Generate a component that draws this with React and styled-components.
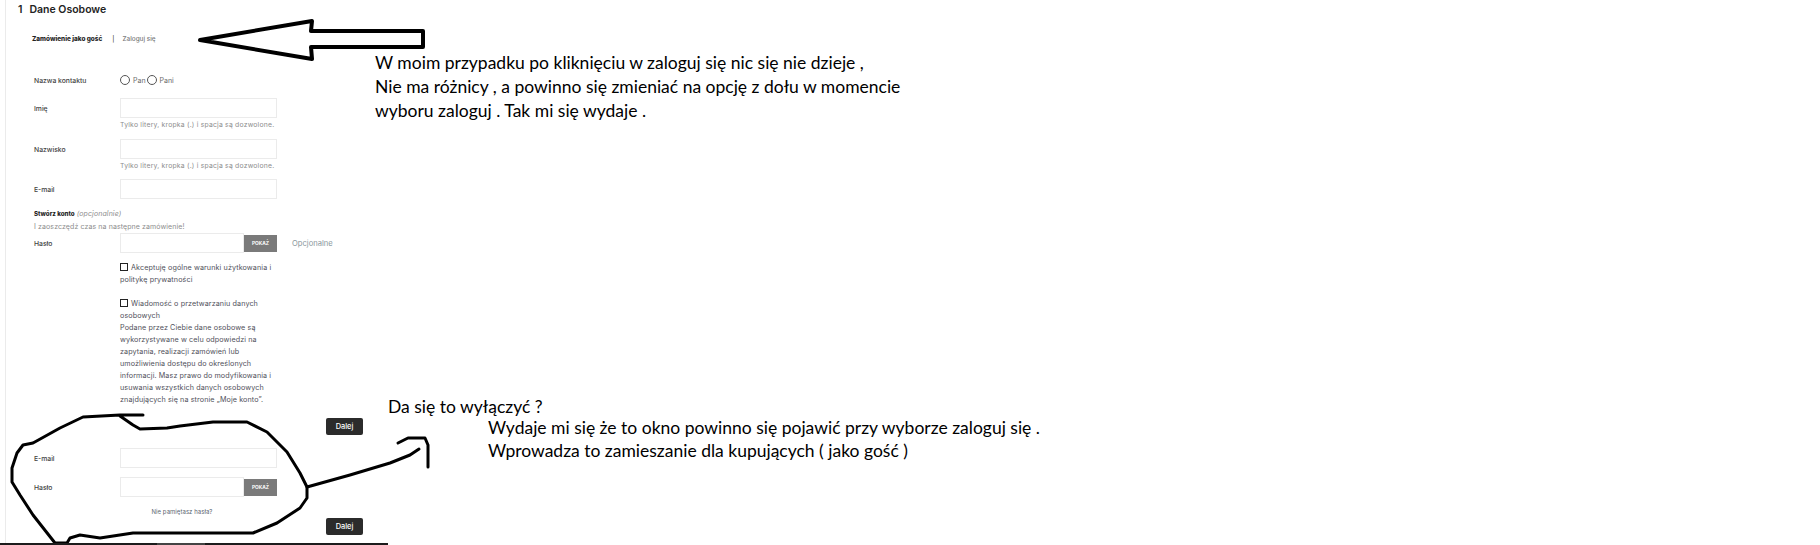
import React from "react";
import styled, { createGlobalStyle } from "styled-components";

const GlobalStyle = createGlobalStyle`
  html, body { margin: 0; padding: 0; background: #fff; }
  body { font-family: "Inter", "Liberation Sans", sans-serif; }
  * { box-sizing: border-box; }
`;

const Page = styled.div`
  position: relative;
  width: 1820px;
  height: 545px;
  overflow: hidden;
  background: #fff;
`;

const Section = styled.section`
  width: 388px;
  height: 543px;
  margin-left: 5px;
  border-left: 1px solid #ebebeb;
  padding-top: 3px;
`;

const Heading = styled.h2`
  margin: 0 0 0 12px;
  font-size: 10.5px;
  line-height: 13px;
  font-weight: 600;
  color: #232323;
  display: flex;
  gap: 7px;
`;

const Tabs = styled.div`
  display: flex;
  align-items: center;
  height: 12px;
  margin: 17px 0 0 26px;
  font-size: 6.4px;
  color: #7a7a7a;
  font-weight: 500;
`;

const ActiveTab = styled.span`
  font-weight: 800;
  color: #232323;
`;

const Separator = styled.span`
  margin: 0 8px 0 10px;
  color: #555;
`;

const Form = styled.form`
  margin: ${(p) => p.$top}px 0 0 28px;
  width: 329px;
`;

const Row = styled.div`
  display: grid;
  grid-template-columns: 86px 157px auto;
  align-items: center;
  min-height: 20px;
  margin-bottom: ${(p) => p.$gap || 0}px;
`;

const Label = styled.label`
  font-size: 6.8px;
  color: #414141;
  font-weight: 500;
`;

const Radios = styled.div`
  display: flex;
  align-items: center;
  gap: 1px;
  font-size: 7px;
  color: #6a6a6a;
`;

const Radio = styled.span`
  width: 10px;
  height: 10px;
  border: 1px solid #555;
  border-radius: 50%;
  margin-right: 2px;
`;

const Input = styled.div`
  height: 20px;
  border: 1px solid #ebebeb;
  background: #fff;
`;

const PasswordField = styled.div`
  display: flex;
  align-items: center;
`;

const PasswordInput = styled(Input)`
  width: 124px;
`;

const ShowButton = styled.span`
  width: 33px;
  height: 17px;
  background: #7a7a7a;
  color: #fff;
  font-size: 4.8px;
  font-weight: 700;
  display: flex;
  align-items: center;
  justify-content: center;
`;

const Optional = styled.span`
  margin-left: 15px;
  font-size: 7.6px;
  color: #8a979c;
`;

const Hint = styled.div`
  margin: 2px 0 0 86px;
  font-size: 6.8px;
  letter-spacing: 0.22px;
  line-height: 9px;
  height: ${(p) => p.$height}px;
  color: #8d8d8d;
  white-space: nowrap;
`;

const Account = styled.div`
  margin-top: 8px;
  font-size: 7px;
  letter-spacing: 0.1px;
  line-height: 13px;
  color: #8d8d8d;
`;

const Strong = styled.strong`
  font-size: 6.2px;
  font-weight: 800;
  letter-spacing: 0;
  color: #232323;
`;

const Consent = styled.div`
  margin: ${(p) => p.$top}px 0 0 86px;
  font-size: 7.2px;
  letter-spacing: 0.1px;
  line-height: 12px;
  color: #50505a;
  white-space: nowrap;
`;

const Checkbox = styled.span`
  display: inline-block;
  width: 8px;
  height: 8px;
  border: 1px solid #232323;
  margin-right: 3px;
  vertical-align: -1px;
`;

const Actions = styled.div`
  display: flex;
  justify-content: flex-end;
  margin-top: ${(p) => p.$top}px;
`;

const NextButton = styled.span`
  width: 37px;
  height: 17px;
  border-radius: 2px;
  background: #2b2b2b;
  color: #fff;
  font-size: 7.4px;
  font-weight: 500;
  display: flex;
  align-items: center;
  justify-content: center;
`;

const Forgot = styled.div`
  margin: 11px 0 0 86px;
  width: 124px;
  text-align: center;
  font-size: 6px;
  letter-spacing: 0.05px;
  line-height: 8px;
  color: #5c6670;
`;

const TaskBar = styled.div`
  position: absolute;
  left: 0;
  bottom: 0;
  width: 388px;
  height: 2px;
  background: linear-gradient(90deg, #1c1c1c 157px, #444 157px, #444 205px, #1c1c1c 205px);
`;

const Note = styled.div`
  position: absolute;
  left: ${(p) => p.$x}px;
  top: ${(p) => p.$y}px;
  font-family: "Lato", "Open Sans", sans-serif;
  font-size: 17.5px;
  line-height: ${(p) => p.$lineHeight || 24}px;
  color: #000;
  white-space: nowrap;
`;

const Drawing = styled.svg`
  position: absolute;
  left: 0;
  top: 0;
  pointer-events: none;
`;

function Annotations() {
  return (
    <Drawing width="1820" height="545" viewBox="0 0 1820 545" fill="none">
      <path
        d="M200 40 L312 21 L311 31 L423 31 L423 47 L311 47 L312 59 Z"
        stroke="#000"
        strokeWidth="4"
        strokeLinejoin="round"
      />
      <path
        d="M143 415 L120 415 L83 417 L60 428 L33 443 L23 445 L17 453 L12 468 L12 482 L20 495 L33 515 L55 543 L67 543 L70 538 L80 535 L100 538 L133 533 L253 533 L277 523 L300 508 L307 498 L307 487 L300 473 L287 452 L267 432 L247 422 L213 422 L180 426 L167 428 L140 429 L133 425 L120 416"
        stroke="#000"
        strokeWidth="3"
        strokeLinejoin="round"
        strokeLinecap="round"
      />
      <path
        d="M307 487 L350 475 L390 463 L410 455 L419 449"
        stroke="#000"
        strokeWidth="3"
        strokeLinejoin="round"
        strokeLinecap="round"
      />
      <path
        d="M398 443 L408 438 L425 438 L428 445 L428 467"
        stroke="#000"
        strokeWidth="3"
        strokeLinejoin="round"
        strokeLinecap="round"
      />
    </Drawing>
  );
}

export default function App() {
  return (
    <Page>
      <GlobalStyle />
      <Section>
        <Heading>
          <span>1</span>
          <span>Dane Osobowe</span>
        </Heading>
        <Tabs>
          <ActiveTab>Zamówienie jako gość</ActiveTab>
          <Separator>|</Separator>
          <span>Zaloguj się</span>
        </Tabs>
        <Form $top={25}>
          <Row $gap={8}>
            <Label>Nazwa kontaktu</Label>
            <Radios>
              <Radio />
              Pan
              <Radio />
              Pani
            </Radios>
          </Row>
          <Row>
            <Label>Imię</Label>
            <Input />
          </Row>
          <Hint $height={19}>Tylko litery, kropka (.) i spacja są dozwolone.</Hint>
          <Row>
            <Label>Nazwisko</Label>
            <Input />
          </Row>
          <Hint $height={18}>Tylko litery, kropka (.) i spacja są dozwolone.</Hint>
          <Row>
            <Label>E-mail</Label>
            <Input />
          </Row>
          <Account>
            <div>
              <Strong>Stwórz konto</Strong> <em>(opcjonalnie)</em>
            </div>
            <div>I zaoszczędź czas na następne zamówienie!</div>
          </Account>
          <Row>
            <Label>Hasło</Label>
            <PasswordField>
              <PasswordInput />
              <ShowButton>POKAŻ</ShowButton>
            </PasswordField>
            <Optional>Opcjonalne</Optional>
          </Row>
          <Consent $top={9}>
            <Checkbox />
            Akceptuję ogólne warunki użytkowania i
            <br />
            politykę prywatności
          </Consent>
          <Consent $top={12}>
            <Checkbox />
            Wiadomość o przetwarzaniu danych
            <br />
            osobowych
            <br />
            Podane przez Ciebie dane osobowe są
            <br />
            wykorzystywane w celu odpowiedzi na
            <br />
            zapytania, realizacji zamówień lub
            <br />
            umożliwienia dostępu do określonych
            <br />
            informacji. Masz prawo do modyfikowania i
            <br />
            usuwania wszystkich danych osobowych
            <br />
            znajdujących się na stronie „Moje konto”.
          </Consent>
          <Actions $top={12}>
            <NextButton>Dalej</NextButton>
          </Actions>
        </Form>
        <Form $top={13}>
          <Row $gap={9}>
            <Label>E-mail</Label>
            <Input />
          </Row>
          <Row>
            <Label>Hasło</Label>
            <PasswordField>
              <PasswordInput />
              <ShowButton>POKAŻ</ShowButton>
            </PasswordField>
          </Row>
          <Forgot>Nie pamiętasz hasła?</Forgot>
          <Actions $top={2}>
            <NextButton>Dalej</NextButton>
          </Actions>
        </Form>
      </Section>
      <Annotations />
      <Note $x={375} $y={51}>
        W moim przypadku po kliknięciu w zaloguj się nic się nie dzieje ,
        <br />
        Nie ma różnicy , a powinno się zmieniać na opcję z dołu w momencie
        <br />
        wyboru zaloguj . Tak mi się wydaje .
      </Note>
      <Note $x={388} $y={395}>Da się to wyłączyć ?</Note>
      <Note $x={488} $y={416} $lineHeight={23}>
        Wydaje mi się że to okno powinno się pojawić przy wyborze zaloguj się .
        <br />
        Wprowadza to zamieszanie dla kupujących ( jako gość )
      </Note>
      <TaskBar />
    </Page>
  );
}
